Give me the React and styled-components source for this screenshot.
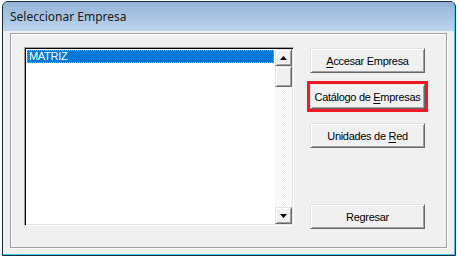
import styled, { createGlobalStyle } from 'styled-components';

const GlobalStyle = createGlobalStyle`
  body {
    margin: 0;
    background: #ffffff;
  }
`;

const Page = styled.div`
  padding: 1px 0 0 2px;
`;

const Window = styled.div`
  width: 454px;
  height: 255px;
  box-sizing: border-box;
  display: flex;
  flex-direction: column;
  border: 1px solid #1c2b3c;
  border-radius: 6px 6px 0 0;
  padding: 0 1px 1px 0;
  background: #3ccaf0;
  overflow: hidden;
`;

const TitleBar = styled.div`
  height: 29px;
  flex: none;
  display: flex;
  align-items: center;
  padding-left: 7px;
  background: linear-gradient(#95b3d6, #bcd5ef);
  font-family: 'Noto Sans', 'Open Sans', sans-serif;
  font-size: 12px;
  color: #1a1a1a;
`;

const Client = styled.div`
  flex: 1;
  display: flex;
  background: #f0f0f0;
  padding: 2px 7px 6px 7px;
`;

const GroupBox = styled.div`
  flex: 1;
  display: flex;
  gap: 16px;
  padding: 13px 18px 13px 13px;
  border: 1px solid #a0a0a0;
  box-shadow: inset 1px 1px 0 #ffffff, 1px 1px 0 #ffffff;
`;

const ListBox = styled.div`
  width: 270px;
  height: 179px;
  box-sizing: border-box;
  display: flex;
  background: #ffffff;
  border-top: 1px solid #a0a0a0;
  border-left: 1px solid #a0a0a0;
  border-right: 1px solid #ffffff;
  border-bottom: 1px solid #ffffff;
  box-shadow: inset 1px 1px 0 #000000, inset -1px -1px 0 #e3e3e3;
  padding: 1px;
`;

const Items = styled.div`
  flex: 1;
  padding: 1px 1px 0 1px;
`;

const Item = styled.div`
  height: 13px;
  line-height: 13px;
  padding-left: 2px;
  font-family: 'Liberation Sans', Arial, sans-serif;
  font-size: 11px;
  letter-spacing: -0.3px;
  color: ${(p) => (p.$selected ? '#ffffff' : '#000000')};
  background: ${(p) => (p.$selected ? '#0078d7' : 'transparent')};
  outline: ${(p) => (p.$selected ? '1px dotted #ffa040' : 'none')};
  outline-offset: -1px;
`;

const ScrollBar = styled.div`
  width: 17px;
  display: flex;
  flex-direction: column;
  background: repeating-conic-gradient(#f0f0f0 0 25%, #ffffff 0 50%) 0 0 / 2px 2px;
`;

const RaisedFace = styled.div`
  box-sizing: border-box;
  background: #f0f0f0;
  border-top: 1px solid #e3e3e3;
  border-left: 1px solid #e3e3e3;
  border-right: 1px solid #696969;
  border-bottom: 1px solid #696969;
  box-shadow: inset 1px 1px 0 #ffffff, inset -1px -1px 0 #a0a0a0;
`;

const ArrowButton = styled(RaisedFace)`
  height: 17px;
  flex: none;
  display: flex;
  align-items: center;
  justify-content: center;
`;

const Thumb = styled(RaisedFace)`
  height: 21px;
  flex: none;
`;

const Track = styled.div`
  flex: 1;
`;

const Buttons = styled.div`
  display: flex;
  flex-direction: column;
  padding-top: 1px;
`;

const Button = styled(RaisedFace)`
  width: 115px;
  height: 25px;
  margin-top: ${(p) => p.$space || 0}px;
  display: flex;
  align-items: center;
  justify-content: center;
  font-family: 'Liberation Sans', Arial, sans-serif;
  font-size: 11px;
  letter-spacing: -0.3px;
  color: #000000;
  outline: ${(p) => (p.$marked ? '3px solid #ed1c24' : 'none')};
  outline-offset: 0;

  u {
    text-decoration-thickness: 1px;
    text-underline-offset: 2px;
  }
`;

const Arrow = ({ down }) => (
  <svg width="7" height="4" viewBox="0 0 7 4">
    <polygon points={down ? '0,0 7,0 3.5,4' : '0,4 7,4 3.5,0'} fill="#000" />
  </svg>
);

export default function App() {
  return (
    <Page>
      <GlobalStyle />
      <Window>
        <TitleBar>Seleccionar Empresa</TitleBar>
        <Client>
          <GroupBox>
            <ListBox>
              <Items>
                <Item $selected>MATRIZ</Item>
              </Items>
              <ScrollBar>
                <ArrowButton>
                  <Arrow />
                </ArrowButton>
                <Thumb />
                <Track />
                <ArrowButton>
                  <Arrow down />
                </ArrowButton>
              </ScrollBar>
            </ListBox>
            <Buttons>
              <Button>
                <span>
                  <u>A</u>ccesar Empresa
                </span>
              </Button>
              <Button $space={11} $marked>
                <span>
                  Catálogo de <u>E</u>mpresas
                </span>
              </Button>
              <Button $space={14}>
                <span>
                  Unidades de <u>R</u>ed
                </span>
              </Button>
              <Button $space={56}>Regresar</Button>
            </Buttons>
          </GroupBox>
        </Client>
      </Window>
    </Page>
  );
}
